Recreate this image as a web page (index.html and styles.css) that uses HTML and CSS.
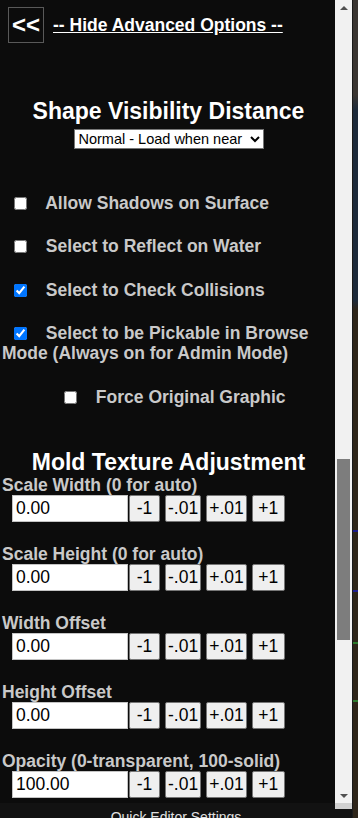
FILE: index.html
```html
<!DOCTYPE html>
<html lang="en">
<head>
    <meta charset="UTF-8">
    <meta name="viewport" content="width=device-width, initial-scale=1.0">
    <title>Advanced Options</title>
    <link rel="stylesheet" href="styles.css">
</head>
<body>
    <div class="screen">
        <div class="editor">
            <div class="editor-body">
                <div class="panel">
                    <div class="top-bar">
                        <button class="back-btn">&lt;&lt;</button>
                        <a href="#" class="toggle-link">-- Hide Advanced Options --</a>
                    </div>

                    <h2 class="section-title first">Shape Visibility Distance</h2>
                    <div class="select-row">
                        <select id="visibility">
                            <option>Normal - Load when near</option>
                            <option>Far - Load always</option>
                        </select>
                    </div>

                    <div class="options">
                        <p class="opt"><input type="checkbox"> Allow Shadows on Surface</p>
                        <p class="opt"><input type="checkbox"> Select to Reflect on Water</p>
                        <p class="opt"><input type="checkbox" checked> Select to Check Collisions</p>
                        <p class="opt"><input type="checkbox" checked> Select to be Pickable in Browse Mode (Always on for Admin Mode)</p>
                        <p class="opt opt-center"><input type="checkbox"> Force Original Graphic</p>
                    </div>

                    <h2 class="section-title">Mold Texture Adjustment</h2>

                    <div class="field">
                        <label>Scale Width (0 for auto)</label>
                        <div class="stepper">
                            <input type="text" value="0.00">
                            <button>-1</button><button>-.01</button><button>+.01</button><button>+1</button>
                        </div>
                    </div>
                    <div class="field">
                        <label>Scale Height (0 for auto)</label>
                        <div class="stepper">
                            <input type="text" value="0.00">
                            <button>-1</button><button>-.01</button><button>+.01</button><button>+1</button>
                        </div>
                    </div>
                    <div class="field">
                        <label>Width Offset</label>
                        <div class="stepper">
                            <input type="text" value="0.00">
                            <button>-1</button><button>-.01</button><button>+.01</button><button>+1</button>
                        </div>
                    </div>
                    <div class="field">
                        <label>Height Offset</label>
                        <div class="stepper">
                            <input type="text" value="0.00">
                            <button>-1</button><button>-.01</button><button>+.01</button><button>+1</button>
                        </div>
                    </div>
                    <div class="field">
                        <label>Opacity (0-transparent, 100-solid)</label>
                        <div class="stepper">
                            <input type="text" value="100.00">
                            <button>-1</button><button>-.01</button><button>+.01</button><button>+1</button>
                        </div>
                    </div>
                </div>

                <!-- fake scrollbar of the panel -->
                <div class="scrollbar">
                    <div class="arrow arrow-up"></div>
                    <div class="track">
                        <div class="thumb"></div>
                    </div>
                    <div class="arrow arrow-down"></div>
                    <div class="corner"></div>
                </div>
            </div>
            <div class="footer">Quick Editor Settings</div>
        </div>
        <div class="scene"></div>
    </div>
</body>
</html>
```

FILE: styles.css
```css
* {
    margin: 0;
    padding: 0;
    box-sizing: border-box;
}

body {
    font-family: "Liberation Sans", Arial, sans-serif;
    background-color: #0c0c0c;
    color: #fff;
    width: 358px;
    height: 818px;
    overflow: hidden;
}

.screen {
    display: flex;
    height: 818px;
}

.editor {
    width: 352px;
    display: flex;
    flex-direction: column;
}

.editor-body {
    display: flex;
    height: 803px;
}

/* Panel */
.panel {
    width: 335px;
    height: 803px;
    overflow: hidden;
    padding-left: 2px;
    background-color: #0c0c0c;
}

.top-bar {
    display: flex;
    align-items: center;
    padding: 7px 0 0 6px;
}

.back-btn {
    width: 36px;
    height: 36px;
    background-color: #0c0c0c;
    border: 1px solid #595959;
    color: #fff;
    font-family: "Liberation Sans", Arial, sans-serif;
    font-size: 24px;
    font-weight: bold;
    line-height: 30px;
}

.toggle-link {
    margin-left: 9px;
    color: #fff;
    font-size: 17.5px;
    font-weight: bold;
    text-decoration: underline;
}

.section-title {
    font-size: 23px;
    line-height: 26px;
    font-weight: bold;
    text-align: center;
    color: #fff;
    margin-top: 42px;
}

.section-title.first {
    margin-top: 55px;
}

.select-row {
    text-align: center;
    margin-top: 5px;
}

select {
    font-family: "Liberation Sans", Arial, sans-serif;
    font-size: 14.5px;
    height: 20px;
    width: 190px;
    color: #000;
    background-color: #fff;
    border: 1px solid #767676;
    border-radius: 0;
}

/* Checkbox options */
.options {
    margin-top: 43.5px;
}

.opt {
    font-size: 17.5px;
    line-height: 20px;
    font-weight: bold;
    color: #c9c9c9;
    text-indent: 8px;
    margin-bottom: 23.5px;
}

.opt input {
    width: 13px;
    height: 13px;
    margin: 0 14px 0 4px;
    vertical-align: -1px;
}

.opt-center {
    text-indent: 0;
    padding-left: 58px;
}

/* Texture fields */
.field {
    margin-bottom: 21.5px;
}

.field:first-of-type {
    margin-top: 4.5px;
}

.field label {
    display: block;
    font-size: 17.5px;
    line-height: 20px;
    font-weight: bold;
    color: #c9c9c9;
}

.stepper {
    display: flex;
    margin: 0.5px 0 0 10px;
    height: 27px;
}

.stepper input {
    width: 116px;
    height: 27px;
    margin-right: 1px;
    padding: 0 3px;
    font-family: "Liberation Sans", Arial, sans-serif;
    font-size: 17.5px;
    color: #000;
    background-color: #fff;
    border: 1px solid #c4c4c4;
    outline: none;
}

.stepper button {
    min-width: 31px;
    height: 27px;
    padding: 0 2px;
    margin-right: 5px;
    font-family: "Liberation Sans", Arial, sans-serif;
    font-size: 17.5px;
    color: #000;
    background-color: #efefef;
    border: 1px solid #767676;
    border-radius: 2px;
}

.stepper button:last-child {
    min-width: 33px;
}

/* Scrollbar */
.scrollbar {
    width: 17px;
    height: 809px;
    background-color: #f1f1f1;
    display: flex;
    flex-direction: column;
    position: relative;
    z-index: 1;
}

.arrow {
    height: 17px;
    display: flex;
    justify-content: center;
    align-items: center;
}

.arrow-up::before {
    content: "";
    border-left: 4px solid transparent;
    border-right: 4px solid transparent;
    border-bottom: 4px solid #505050;
    margin-bottom: 1px;
}

.arrow-down::before {
    content: "";
    border-left: 4px solid transparent;
    border-right: 4px solid transparent;
    border-top: 4px solid #505050;
    margin-top: 2px;
}

.track {
    flex: 1;
    padding-top: 442px;
}

.thumb {
    width: 13px;
    height: 181px;
    margin-left: 2px;
    background-color: #7d7d7d;
}

.corner {
    height: 6px;
    background-color: #d0d0d0;
}

.footer {
    height: 15px;
    background-color: #121212;
    color: #e0e0e0;
    font-size: 14px;
    line-height: 18px;
    padding-top: 5px;
    text-align: center;
    overflow: hidden;
}

/* 3D scene behind the editor */
.scene {
    width: 6px;
    height: 818px;
    background:
        linear-gradient(to bottom,
            transparent 0, transparent 530px,
            #1a1a8a 530px, #1a1a8a 532px,
            transparent 532px, transparent 590px,
            #1f1f90 590px, #1f1f90 592px,
            transparent 592px, transparent 642px,
            #2a7a2a 642px, #2a7a2a 644px,
            transparent 644px, transparent 700px,
            #2d7a2d 700px, #2d7a2d 702px,
            transparent 702px),
        linear-gradient(to bottom,
            #3a3531 0, #3a3531 95px,
            #1d2a3a 110px, #1d2a3a 300px,
            #2e2519 310px, #2e2519 818px);
    border-left: 1px solid #1a1a1a;
}
```
